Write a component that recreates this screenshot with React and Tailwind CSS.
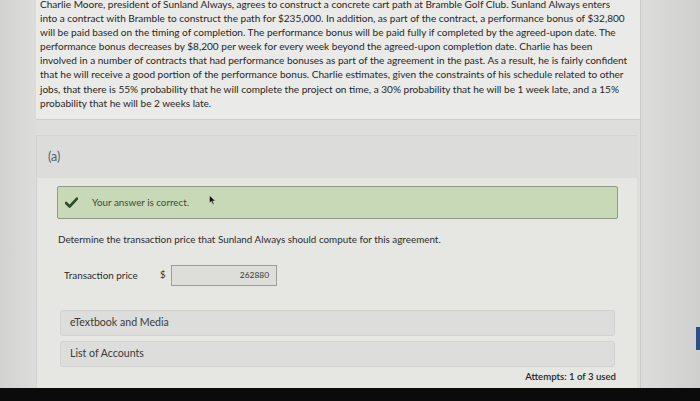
import React from "react";

const lines = [
  "Charlie Moore, president of Sunland Always, agrees to construct a concrete cart path at Bramble Golf Club. Sunland Always enters",
  "into a contract with Bramble to construct the path for $235,000. In addition, as part of the contract, a performance bonus of $32,800",
  "will be paid based on the timing of completion. The performance bonus will be paid fully if completed by the agreed-upon date. The",
  "performance bonus decreases by $8,200 per week for every week beyond the agreed-upon completion date. Charlie has been",
  "involved in a number of contracts that had performance bonuses as part of the agreement in the past. As a result, he is fairly confident",
  "that he will receive a good portion of the performance bonus. Charlie estimates, given the constraints of his schedule related to other",
  "jobs, that there is 55% probability that he will complete the project on time, a 30% probability that he will be 1 week late, and a 15%",
  "probability that he will be 2 weeks late.",
];

export default function App() {
  return (
    <div className="w-[700px] h-[401px] overflow-hidden relative bg-[#d7d8d5] font-['Lato','Liberation_Sans',sans-serif]">
      <div className="flex h-[388px]">
        <div className="w-[36px] bg-gradient-to-r from-[#d2d3d0] to-[#dcddda]" />
        <div className="w-[604px] flex flex-col bg-[#dedfdc]">
          <div className="h-[120px] bg-[#eaebe8] border-b border-[#cdcecb] pl-[4px] pt-0 overflow-hidden">
            <div className="mt-[-3px] text-[10.05px] leading-[14.1px] text-[#262626] whitespace-nowrap">
              {lines.map((l, i) => (
                <div key={i}>{l}</div>
              ))}
            </div>
          </div>
          <div className="h-[15px]" />
          <div className="flex-1 mr-[3px] flex flex-col bg-[#e6e7e3] border-l border-t border-[#d3d4d1]">
            <div className="h-[42px] bg-[#dcddda] flex items-center pl-[11px] text-[12.5px] text-[#56616d]">
              (a)
            </div>
            <div className="flex-1 relative pl-[20px] pr-[19px] pt-[8px]">
              <div className="h-[33px] bg-[#c7d9b7] border border-[#8e9c86] rounded-[2px] flex items-center pl-[7px]">
                <svg width="13" height="11" viewBox="0 0 13 11" className="mr-[14px]">
                  <path d="M1 6 L4.6 9.5 L12 1.6" fill="none" stroke="#2c4a2c" strokeWidth="2.6" strokeLinecap="round" strokeLinejoin="round" />
                </svg>
                <span className="text-[9.8px] text-[#3b4a3c]">Your answer is correct.</span>
              </div>
              <svg className="absolute left-[172px] top-[17px]" width="7" height="10" viewBox="0 0 7 10">
                <path d="M0.5 0.5 L0.5 8 L2.4 6.3 L3.8 9.4 L5 8.9 L3.7 5.9 L6.3 5.9 Z" fill="#111" stroke="#eee" strokeWidth="0.4" />
              </svg>
              <div className="mt-[13px] text-[9.85px] text-[#2b2b2b] pl-[1px]">
                Determine the transaction price that Sunland Always should compute for this agreement.
              </div>
              <div className="mt-[18px] flex items-center pl-[7px]">
                <span className="text-[9.9px] text-[#2b2b2b] w-[96px]">Transaction price</span>
                <span className="text-[9.6px] text-[#2b2b2b] w-[11px]">$</span>
                <div className="w-[106px] h-[21px] bg-[#dddeda] border border-[#9c9d9a] flex items-center justify-end pr-[7px] text-[8.4px] text-[#333]">
                  262880
                </div>
              </div>
              <div className="mt-[24px] ml-[3px] mr-[3px] h-[26px] bg-[#dddedb] border border-[#d2d3d0] rounded-[3px] flex items-center pl-[9px] text-[10.6px] text-[#3a3a3a]">
                eTextbook and Media
              </div>
              <div className="mt-[5px] ml-[3px] mr-[3px] h-[26px] bg-[#dddedb] border border-[#d2d3d0] rounded-[3px] flex items-center pl-[9px] text-[10.6px] text-[#3a3a3a]">
                List of Accounts
              </div>
              <div className="mt-[3px] mr-[2px] text-right text-[9.6px] font-semibold text-[#1f1f1f]">
                Attempts: 1 of 3 used
              </div>
            </div>
          </div>
        </div>
        <div className="flex-1 relative bg-gradient-to-r from-[#dcdcda] to-[#cfd0ce] border-l border-[#c9cac7]">
          <div className="absolute right-0 top-[327px] w-[4px] h-[23px] bg-[#2d4f86]" />
        </div>
      </div>
      <div className="h-[13px] bg-[#0b0b0b]" />
    </div>
  );
}
